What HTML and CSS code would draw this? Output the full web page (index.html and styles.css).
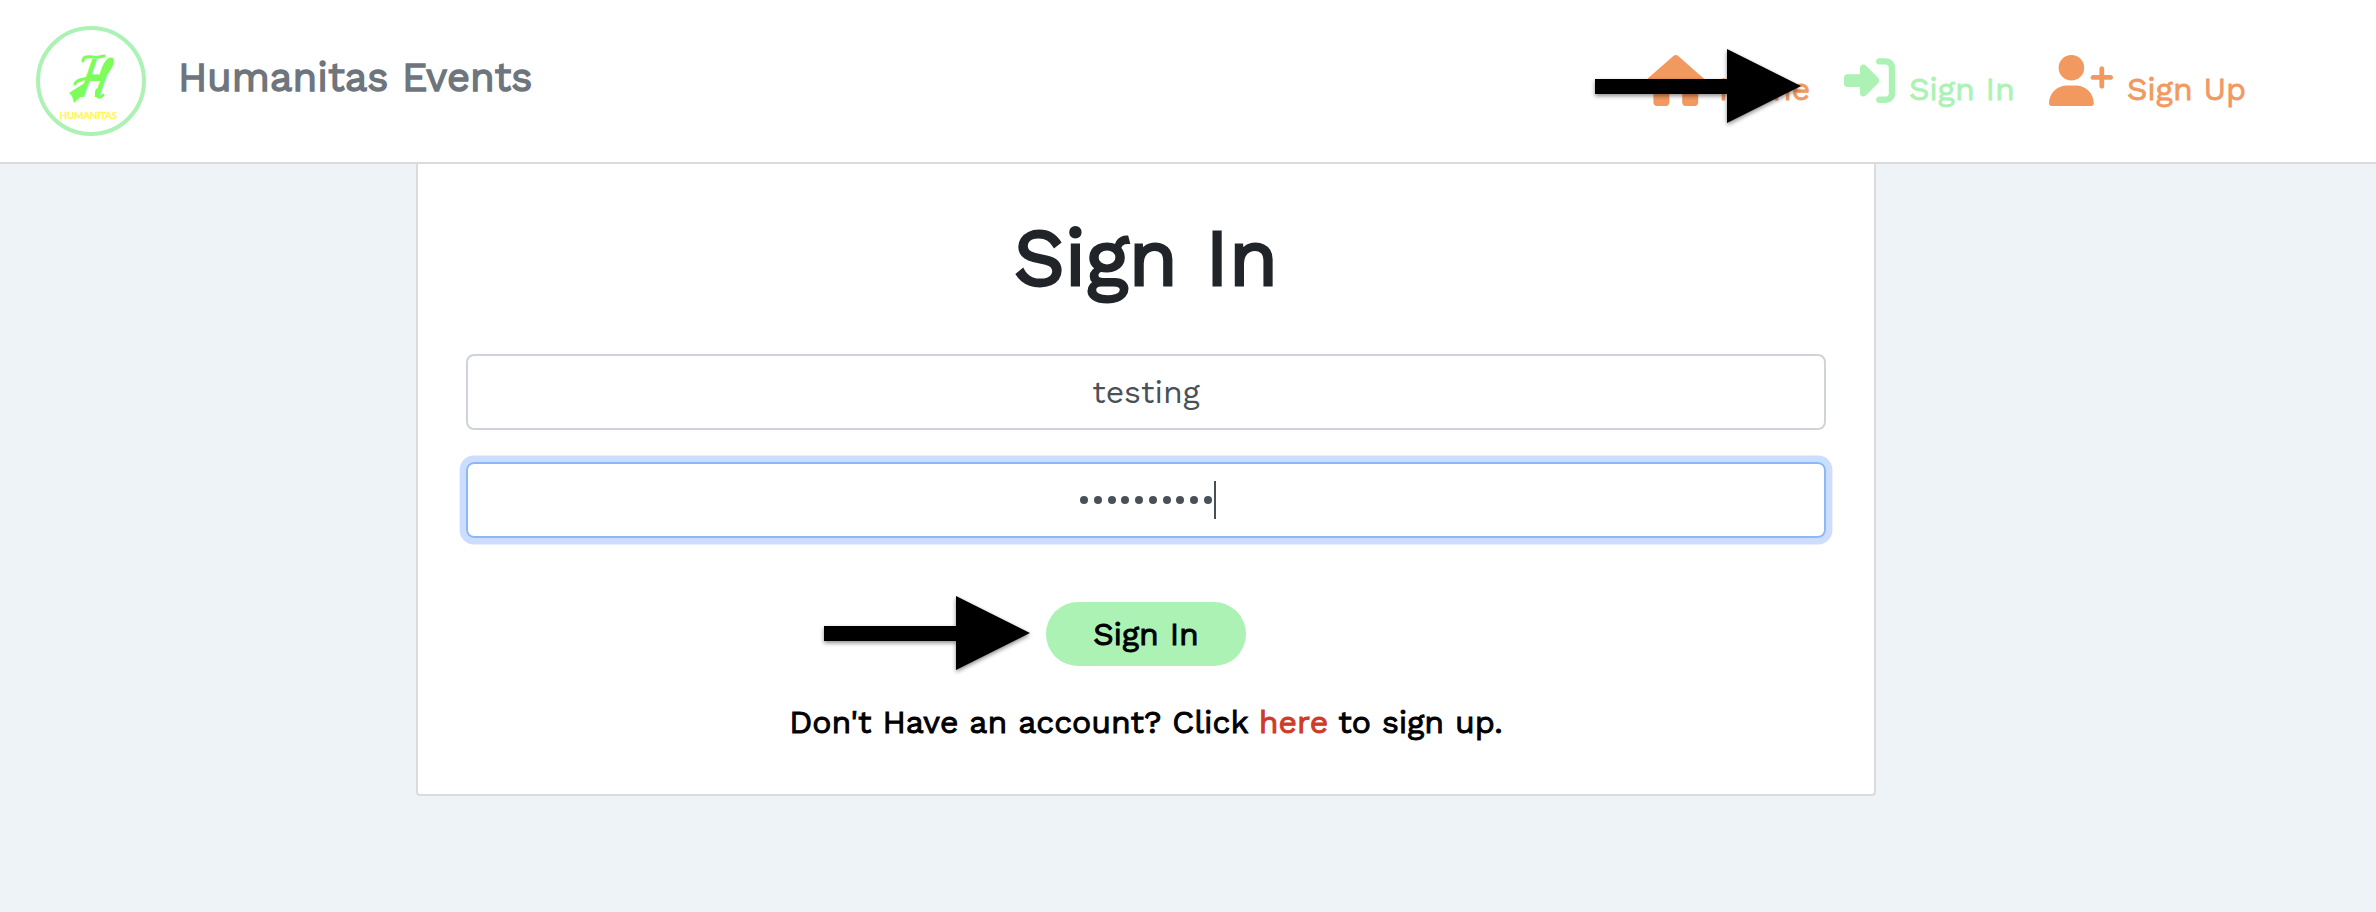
FILE: index.html
```html
<!DOCTYPE html>
<html lang="en">
<head>
<meta charset="utf-8">
<title>Humanitas Events</title>
<link rel="stylesheet" href="styles.css">
</head>
<body>
<header class="navbar">
  <a class="brand">
    <svg class="logo" viewBox="0 0 110 110">
      <circle cx="55" cy="55" r="53" fill="#fff" stroke="#abf2b4" stroke-width="4"/>
      <text class="logo-letter" transform="translate(40 71) skewX(-19) scale(.62 1)">H</text>
      <g class="logo-swash">
        <path d="M47 35c0-7 10-3 16-4l5-1"/>
        <path d="M66 50c8-4 13-17 9-17-4 0-8 8-10 16"/>
        <path d="M39 58c2-5 10-5 15-6"/>
        <path d="M61 64c-2 7 2 9 6 5"/>
      </g>
      <path d="M47 58 33 67c4 3 4 6 5 10 7-6 10-10 13-19z" fill="#7dfd59"/>
      <text class="logo-name" x="23.5" y="92.5" textLength="57.5">HUMANITAS</text>
    </svg>
    <span class="brand-name">Humanitas Events</span>
  </a>
  <nav class="links">
    <a class="link home">
      <svg class="icon" width="57.6" height="51.2" viewBox="0 0 576 512"><path d="M575.8 255.5c0 18-15 32.1-32 32.1h-32l.7 160.2c0 2.7-.2 5.4-.5 8.1V472c0 22.1-17.9 40-40 40H456c-1.1 0-2.2 0-3.3-.1c-1.4 .1-2.8 .1-4.2 .1H416 392c-22.1 0-40-17.9-40-40V448 384c0-17.7-14.3-32-32-32H256c-17.7 0-32 14.3-32 32v64 24c0 22.1-17.9 40-40 40H160 128.1c-1.5 0-3-.1-4.5-.2c-1.2 .1-2.4 .2-3.6 .2H104c-22.1 0-40-17.9-40-40V360c0-.9 0-1.9 .1-2.8V287.6H32c-18 0-32-14-32-32.1c0-9 3-17 10-24L266.4 8c7-7 15-8 22-8s15 2 21 7L564.8 231.5c8 7 12 15 11 24z"/></svg>
      <span class="link-text">Home</span>
    </a>
    <a class="link active">
      <svg class="icon" width="51.2" height="51.2" viewBox="0 0 512 512"><path d="M217.9 105.9L340.7 228.7c7.2 7.2 11.3 17.1 11.3 27.3s-4.1 20.1-11.3 27.3L217.9 406.1c-6.4 6.4-15 9.9-24 9.9c-18.7 0-33.9-15.2-33.9-33.9l0-62.1L32 320c-17.7 0-32-14.3-32-32l0-64c0-17.7 14.3-32 32-32l128 0 0-62.1c0-18.7 15.2-33.9 33.9-33.9c9 0 17.6 3.6 24 9.9zM352 416l64 0c17.7 0 32-14.3 32-32l0-256c0-17.7-14.3-32-32-32l-64 0c-17.7 0-32-14.3-32-32s14.3-32 32-32l64 0c53 0 96 43 96 96l0 256c0 53-43 96-96 96l-64 0c-17.7 0-32-14.3-32-32s14.3-32 32-32z"/></svg>
      <span class="link-text">Sign In</span>
    </a>
    <a class="link">
      <svg class="icon" width="64" height="51.2" viewBox="0 0 640 512"><path d="M96 128a128 128 0 1 1 256 0A128 128 0 1 1 96 128zM0 482.3C0 383.8 79.8 304 178.3 304h91.4C368.2 304 448 383.8 448 482.3c0 16.4-13.3 29.7-29.7 29.7H29.7C13.3 512 0 498.7 0 482.3zM504 312V248H440c-13.3 0-24-10.7-24-24s10.7-24 24-24h64V136c0-13.3 10.7-24 24-24s24 10.7 24 24v64h64c13.3 0 24 10.7 24 24s-10.7 24-24 24H552v64c0 13.3-10.7 24-24 24s-24-10.7-24-24z"/></svg>
      <span class="link-text">Sign Up</span>
    </a>
  </nav>
  <svg class="arrow arrow-nav" width="206" height="74" viewBox="0 0 206 74"><path d="M0 30h132V0l74 37-74 37V45H0z"/></svg>
</header>
<main class="card">
  <h1 class="title">Sign In</h1>
  <div class="field"><span class="field-text">testing</span></div>
  <div class="field focused">
    <span class="dots"><i></i><i></i><i></i><i></i><i></i><i></i><i></i><i></i><i></i><i></i></span>
    <span class="caret"></span>
  </div>
  <div class="actions">
    <button class="submit">Sign In</button>
    <svg class="arrow arrow-submit" width="206" height="74" viewBox="0 0 206 74"><path d="M0 30h132V0l74 37-74 37V45H0z"/></svg>
  </div>
  <p class="note">Don't Have an account? Click <a class="here">here</a> to sign up.</p>
</main>
</body>
</html>
```
FILE: styles.css
```css
* { box-sizing: border-box; }
body {
  margin: 0;
  height: 912px;
  overflow: hidden;
  background: #eef3f8;
  font-family: "Work Sans", "Open Sans", sans-serif;
}
.navbar {
  position: relative;
  height: 164px;
  display: flex;
  justify-content: space-between;
  background: #fff;
  border-bottom: 2px solid #dadadf;
}
.brand { display: flex; padding: 26px 0 0 36px; }
.logo { width: 110px; height: 110px; }
.logo-letter { font: 600 58px "Work Sans", sans-serif; fill: #7dfd59; }
.logo-swash { fill: none; stroke: #7dfd59; stroke-width: 3; stroke-linecap: round; }
.logo-name { font: bold 10px Lato, sans-serif; fill: #fff75a; stroke: #fff75a; stroke-width: 0.3; }
.brand-name {
  margin: 22px 0 0 32px;
  line-height: 60px;
  font-size: 40px;
  -webkit-text-stroke: 1.5px currentColor;
  color: #6e757d;
  white-space: nowrap;
}
.links { display: flex; padding: 55px 129px 0 0; }
.link { display: flex; color: #f1995f; }
.link + .link { margin-left: 34px; }
.icon { fill: currentColor; flex: none; }
.link-text {
  margin-left: 14px;
  width: 106px;
  line-height: 44px;
  padding-top: 12px;
  font-size: 32px;
  -webkit-text-stroke: 0.8px currentColor;
  white-space: nowrap;
}
.home .link-text { width: 91px; }
.link:last-child .link-text { width: 120px; }
.active { color: #abf2b4; }
.arrow { position: absolute; filter: drop-shadow(0 2px 2px rgba(0, 0, 0, 0.45)); overflow: visible; }
.arrow-nav { left: 1595px; top: 49px; }
.card {
  width: 1460px;
  height: 632px;
  margin-left: 416px;
  padding: 0 48px;
  background: #fff;
  border: 2px solid #dadadf;
  border-top: 0;
  border-radius: 0 0 4px 4px;
}
.title {
  margin: 0;
  height: 190px;
  padding-top: 42px;
  line-height: 104px;
  text-align: center;
  font-size: 80px;
  font-weight: 400;
  -webkit-text-stroke: 2.8px currentColor;
  color: #212529;
}
.field {
  height: 76px;
  margin-bottom: 32px;
  display: flex;
  justify-content: center;
  align-items: center;
  border: 2px solid #ced4da;
  border-radius: 8px;
  color: #495057;
}
.field-text { font-size: 32px; line-height: 44px; }
.focused { border-color: #8cb8fa; box-shadow: 0 0 0 6.4px #cdddff; }
.dots { display: flex; gap: 5.75px; padding-left: 4px; }
.dots i { width: 8px; height: 8px; border-radius: 50%; background: currentColor; }
.caret { width: 2px; height: 38px; margin-left: 2px; background: currentColor; }
.actions { position: relative; display: flex; justify-content: center; padding-top: 32px; }
.submit {
  width: 200px;
  height: 64px;
  border: 0;
  border-radius: 32px;
  padding: 0;
  background: #abf2b4;
  color: #000;
  font: 400 32px/60px "Work Sans", "Open Sans", sans-serif;
  -webkit-text-stroke: 1px currentColor;
}
.arrow-submit { left: 358px; top: 26px; }
.note {
  margin: 34px 0 0;
  line-height: 44px;
  text-align: center;
  font-size: 32px;
  -webkit-text-stroke: 1px currentColor;
  color: #000;
}
.here { color: #d03a27; }
```
